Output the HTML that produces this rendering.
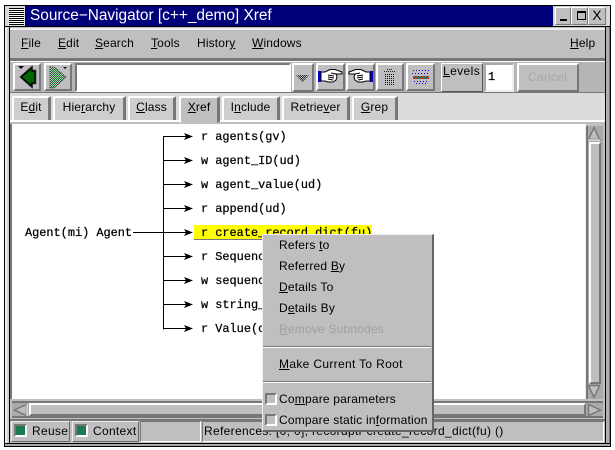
<!DOCTYPE html>
<html><head><meta charset="utf-8"><style>
html,body{margin:0;padding:0;background:#fff}
body{width:615px;height:450px;position:relative;overflow:hidden;font-family:"Liberation Sans",sans-serif;font-size:12px;color:#000}
div{position:absolute;box-sizing:border-box}
svg{position:absolute}
.t{white-space:nowrap;line-height:14px;letter-spacing:.15px}
.p{letter-spacing:.2px}
.b{background:#c0bec0;border:2px solid;border-color:#fff #777 #777 #fff}
.s{background:#c0bec0;border:2px solid;border-color:#777 #fff #fff #777}
.m{font-family:"Liberation Mono",monospace;font-size:11.9px;white-space:nowrap;line-height:14px;-webkit-text-stroke:.25px #000}
u{text-underline-offset:1px}
.tab{top:96px;height:24px;border-top:2px solid #fff;border-left:2px solid #fff;border-right:3px solid #777;text-align:center;line-height:19px;font-size:12px;background:#cfcdcf;border-radius:2px 2px 0 0;letter-spacing:.15px;white-space:nowrap}
</style></head><body>
<svg width="0" height="0"><defs>
<pattern id="dg" width="2" height="2" patternUnits="userSpaceOnUse"><rect width="2" height="2" fill="#c0bec0"/><rect width="1" height="1" fill="#0a7a20"/><rect x="1" y="1" width="1" height="1" fill="#0a7a20"/></pattern>
<pattern id="dk" width="2" height="2" patternUnits="userSpaceOnUse"><rect width="2" height="2" fill="#c0bec0"/><rect width="1" height="1" fill="#111"/></pattern>
<pattern id="ch" width="2" height="2" patternUnits="userSpaceOnUse"><rect width="2" height="2" fill="#c0bec0"/><rect width="1" height="1" fill="#222"/><rect x="1" y="1" width="1" height="1" fill="#222"/></pattern>
</defs></svg>
<div style="left:4px;top:5px;width:607px;height:442px;background:#c0bec0;border:1px solid #000"></div>
<div style="left:5px;top:6px;width:605px;height:21px;background:#d8d6d8"></div>
<div style="left:8px;top:7px;width:17px;height:19px;background:repeating-linear-gradient(#000 0 1px,#fff 1px 2px);border:1px solid #ddd"></div>
<div style="left:25px;top:6px;width:528px;height:20px;background:#00007b"></div>
<div class="t" style="left:30px;top:7px;color:#fff;font-size:15.4px;line-height:18px;letter-spacing:0">Source−Navigator [c++_demo] Xref</div>
<div style="left:5px;top:26px;width:605px;height:1px;background:#000"></div>
<div class="b" style="left:555px;top:7px;width:16px;height:18px;border-width:1px"></div>
<div style="left:560px;top:19px;width:7px;height:2px;background:#000"></div>
<div class="b" style="left:571px;top:7px;width:17px;height:18px;border-width:1px"></div>
<div style="left:577px;top:11px;width:9px;height:9px;border:1px solid #000;border-top-width:2px"></div>
<div class="b" style="left:588px;top:7px;width:18px;height:18px;border-width:1px"></div>
<div class="t" style="left:591px;top:8px;font-size:14px;width:12px;text-align:center">X</div>
<div style="left:5px;top:27px;width:5px;height:419px;background:#d0ced0;border-left:2px solid #eee;border-right:1px solid #000"></div>
<div style="left:605px;top:27px;width:5px;height:419px;background:#b0aeb0;border-left:1px solid #000;border-right:1px solid #777"></div>
<div style="left:5px;top:443px;width:605px;height:3px;background:#aaa;border-top:1px solid #000"></div>

<div style="left:10px;top:28px;width:595px;height:33px;background:#c0bec0;border-top:2px solid #eee;border-bottom:3px solid #777"></div>
<div class="t" style="left:21px;top:36px"><u>F</u>ile</div>
<div class="t" style="left:58px;top:36px"><u>E</u>dit</div>
<div class="t" style="left:95px;top:36px"><u>S</u>earch</div>
<div class="t" style="left:151px;top:36px"><u>T</u>ools</div>
<div class="t" style="left:197px;top:36px">Histor<u>y</u></div>
<div class="t" style="left:252px;top:36px"><u>W</u>indows</div>
<div class="t" style="left:570px;top:36px"><u>H</u>elp</div>

<div style="left:10px;top:61px;width:595px;height:32px;background:#b6b4b6;border-top:1px solid #fff;border-bottom:1px solid #777"></div>
<div class="b" style="left:13px;top:63px;width:28px;height:28px"></div>
<svg style="left:13px;top:63px" width="28" height="28"><path d="M7 14L19 3V7H23V21H19V25Z" fill="#fff" stroke="#666"/><path d="M8 14L19 4.500V8H22V20H19V23.500Z" fill="#006400" stroke="#000" stroke-width="1.500"/><path d="M5 3h6L8 6z" fill="#000"/></svg>
<div class="b" style="left:44px;top:63px;width:28px;height:28px"></div>
<svg style="left:44px;top:63px" width="28" height="28"><path d="M6 4H10L22 14 10 25H6Z" fill="url(#dg)" stroke="#333" stroke-dasharray="1 1"/><path d="M19 4h4l-2 2z" fill="#000"/></svg>
<div class="s" style="left:75px;top:63px;width:216px;height:29px;background:#fff"></div>
<div class="b" style="left:292px;top:63px;width:22px;height:29px"></div>
<svg style="left:295px;top:74px" width="16" height="9"><path d="M1 1h13L7.500 8z" fill="url(#ch)"/></svg>
<div class="b" style="left:316px;top:63px;width:29px;height:28px"></div>
<svg style="left:317px;top:67px" width="28" height="20"><rect x="1" y="4" width="3" height="11" fill="#0000c8"/><path d="M4 5H8L13 2.500H18L25 5V7H19L20 10 19 13 16 15H11L8 14H4Z" fill="#fff" stroke="#000"/><path d="M11 8L17 9M11 10L17 11M11 12L16 13M14 6L19 7" stroke="#000" fill="none"/></svg>
<div class="b" style="left:346px;top:63px;width:29px;height:28px"></div>
<svg style="left:346px;top:67px" width="28" height="20"><g transform="translate(28 0) scale(-1 1)"><rect x="1" y="4" width="3" height="11" fill="#0000c8"/><path d="M4 5H8L13 2.500H18L25 5V7H19L20 10 19 13 16 15H11L8 14H4Z" fill="#fff" stroke="#000"/><path d="M11 8L17 9M11 10L17 11M11 12L16 13M14 6L19 7" stroke="#000" fill="none"/></g></svg>
<div class="b" style="left:376px;top:63px;width:28px;height:28px"></div>
<svg style="left:383px;top:68px" width="14" height="18"><path d="M4 1.500h5M1 3.500h11" stroke="#222" stroke-dasharray="1 1"/><rect x="2" y="5" width="9" height="12" fill="url(#dk)"/></svg>
<div class="b" style="left:406px;top:63px;width:29px;height:28px"></div>
<svg style="left:411px;top:68px" width="20" height="18"><path d="M2 2.500h16M1 5.500h16M3 13.500h14M5 15.500h10" stroke="#00d" stroke-dasharray="1 2"/><rect x="2" y="8" width="16" height="3" fill="#1a7a5a"/><path d="M2 8.500h16M2 10.500h16" stroke="#c33" stroke-dasharray="2 1"/></svg>
<div class="b" style="left:441px;top:63px;width:42px;height:29px;border-width:1px;border-color:#fff #555 #555 #fff"></div>
<div class="t" style="left:443px;top:64px;letter-spacing:.4px"><u>L</u>evels</div>
<div class="s" style="left:484px;top:63px;width:30px;height:29px;background:#fff;border-color:#aaa #eee #eee #aaa"></div>
<div class="m" style="left:488px;top:70px">1</div>
<div class="b" style="left:517px;top:63px;width:62px;height:29px"></div>
<div class="t" style="left:528px;top:70px;color:#a8a8a8;letter-spacing:.3px">Cancel</div>

<div style="left:10px;top:93px;width:595px;height:29px;background:#dcdadc"></div>
<div style="left:10px;top:120px;width:595px;height:2px;background:#fff"></div>
<div class="tab" style="left:12px;width:39px">E<u>d</u>it</div>
<div class="tab" style="left:53px;width:73px">Hie<u>r</u>archy</div>
<div class="tab" style="left:128px;width:48px"><u>C</u>lass</div>
<div class="tab" style="left:179px;width:41px;height:27px;background:#c0bec0"><u>X</u>ref</div>
<div class="tab" style="left:222px;width:58px">I<u>n</u>clude</div>
<div class="tab" style="left:282px;width:68px">Retrie<u>v</u>er</div>
<div class="tab" style="left:352px;width:46px"><u>G</u>rep</div>

<div style="left:10px;top:122px;width:170px;height:2px;background:#c0bec0"></div>
<div style="left:218px;top:122px;width:387px;height:2px;background:#c0bec0"></div>
<div style="left:12px;top:124px;width:573px;height:275px;background:#fff"></div>
<div style="left:10px;top:124px;width:2px;height:275px;background:#777"></div>

<div style="left:585px;top:124px;width:20px;height:275px;background:#c0bec0;border-left:1px solid #eee"></div>
<div style="left:586px;top:126px;width:17px;height:273px;background:#aaa;border-left:2px solid #777"></div>
<div class="b" style="left:589px;top:142px;width:12px;height:242px"></div>
<svg style="left:587px;top:126px" width="15" height="15"><path d="M7 1.500L1.500 13.500H12.500Z" fill="#c0bec0" stroke="#777" stroke-width="1.500"/><path d="M1 14H13" stroke="#fff"/></svg>
<svg style="left:587px;top:384px" width="15" height="15"><path d="M7 13.500L1.500 1.500H12.500Z" fill="#c0bec0" stroke="#777" stroke-width="1.500"/></svg>

<svg style="left:0;top:0" width="615" height="450">
<path d="M133 232.500H163M163.500 136.500V329.500" stroke="#000" fill="none"/>
<g stroke="#000"><path d="M163 136.500h24M163 160.500h24M163 184.500h24M163 208.500h24M163 232.500h24M163 256.500h24M163 280.500h24M163 304.500h24M163 328.500h24"/></g>
<g fill="#000"><path d="M184 133l9 3.500-9 3.500 2-3.500z"/><path d="M184 157l9 3.500-9 3.500 2-3.500z"/><path d="M184 181l9 3.500-9 3.500 2-3.500z"/><path d="M184 205l9 3.500-9 3.500 2-3.500z"/><path d="M184 229l9 3.500-9 3.500 2-3.500z"/><path d="M184 253l9 3.500-9 3.500 2-3.500z"/><path d="M184 277l9 3.500-9 3.500 2-3.500z"/><path d="M184 301l9 3.500-9 3.500 2-3.500z"/><path d="M184 325l9 3.500-9 3.500 2-3.500z"/></g>
</svg>
<div class="m" style="left:25px;top:226px">Agent(mi) Agent</div>
<div style="left:194px;top:225px;width:178px;height:15px;background:#ffff00;border-bottom:1px solid #777"></div>
<div class="m" style="left:201px;top:130px">r agents(gv)</div>
<div class="m" style="left:201px;top:154px">w agent_ID(ud)</div>
<div class="m" style="left:201px;top:178px">w agent_value(ud)</div>
<div class="m" style="left:201px;top:202px">r append(ud)</div>
<div class="m" style="left:201px;top:226px">r create_record_dict(fu)</div>
<div class="m" style="left:201px;top:250px">r Sequence</div>
<div class="m" style="left:201px;top:274px">w sequence</div>
<div class="m" style="left:201px;top:298px">w string_</div>
<div class="m" style="left:201px;top:322px">r Value(c</div>

<div style="left:10px;top:399px;width:595px;height:20px;background:#c0bec0"></div>
<div style="left:12px;top:401px;width:591px;height:17px;background:#aaa;border-top:2px solid #777;border-bottom:2px solid #777"></div>
<svg style="left:13px;top:403px" width="15" height="14"><path d="M1.500 7L13.500 1.500V12.500Z" fill="#c0bec0" stroke="#777" stroke-width="1.500"/><path d="M14 1V13" stroke="#fff"/></svg>
<div class="b" style="left:29px;top:403px;width:557px;height:13px"></div>
<svg style="left:587px;top:403px" width="15" height="14"><path d="M13.500 7L1.500 1.500V12.500Z" fill="#c0bec0" stroke="#777" stroke-width="1.500"/></svg>

<div style="left:10px;top:419px;width:595px;height:24px;background:#c0bec0;border-top:2px solid #777"></div>
<div class="b" style="left:11px;top:421px;width:59px;height:21px;border-color:#eee #666 #666 #eee;border-width:1px"></div>
<div class="s" style="left:14px;top:424px;width:13px;height:13px;background:#1a7a50"></div>
<div class="t" style="left:32px;top:424px;letter-spacing:.3px">Reuse</div>
<div class="b" style="left:72px;top:421px;width:67px;height:21px;border-color:#eee #666 #666 #eee;border-width:1px"></div>
<div class="s" style="left:75px;top:424px;width:13px;height:13px;background:#1a7a50"></div>
<div class="t" style="left:93px;top:424px;letter-spacing:.3px">Context</div>
<div class="s" style="left:140px;top:421px;width:61px;height:21px;border-width:1px"></div>
<div class="s" style="left:202px;top:421px;width:402px;height:21px;border-width:1px"></div>
<div class="t" style="left:204px;top:424px;letter-spacing:.33px">References: [0, 0], recordptr create_record_dict(fu) ()</div>

<div style="left:262px;top:234px;width:172px;height:198px;background:#c0bec0;border-right:2px solid #666;border-bottom:2px solid #666;border-top:1px solid #eee;border-left:1px solid #eee"></div>
<div class="t p" style="left:279px;top:238px">Refers <u>t</u>o</div>
<div class="t p" style="left:279px;top:259px">Referred <u>B</u>y</div>
<div class="t p" style="left:279px;top:280px"><u>D</u>etails To</div>
<div class="t p" style="left:279px;top:301px">D<u>e</u>tails By</div>
<div class="t p" style="left:279px;top:322px;color:#a0a0a0"><u>R</u>emove Subnodes</div>
<div style="left:263px;top:346px;width:168px;height:2px;background:linear-gradient(#777 50%,#fff 50%)"></div>
<div class="t" style="left:279px;top:357px;letter-spacing:.33px"><u>M</u>ake Current To Root</div>
<div style="left:263px;top:381px;width:168px;height:2px;background:linear-gradient(#777 50%,#fff 50%)"></div>
<div class="s" style="left:265px;top:393px;width:12px;height:12px"></div>
<div class="t p" style="left:279px;top:392px">Co<u>m</u>pare parameters</div>
<div class="s" style="left:265px;top:414px;width:12px;height:12px"></div>
<div class="t p" style="left:279px;top:413px">Compare static in<u>f</u>ormation</div>
</body></html>
